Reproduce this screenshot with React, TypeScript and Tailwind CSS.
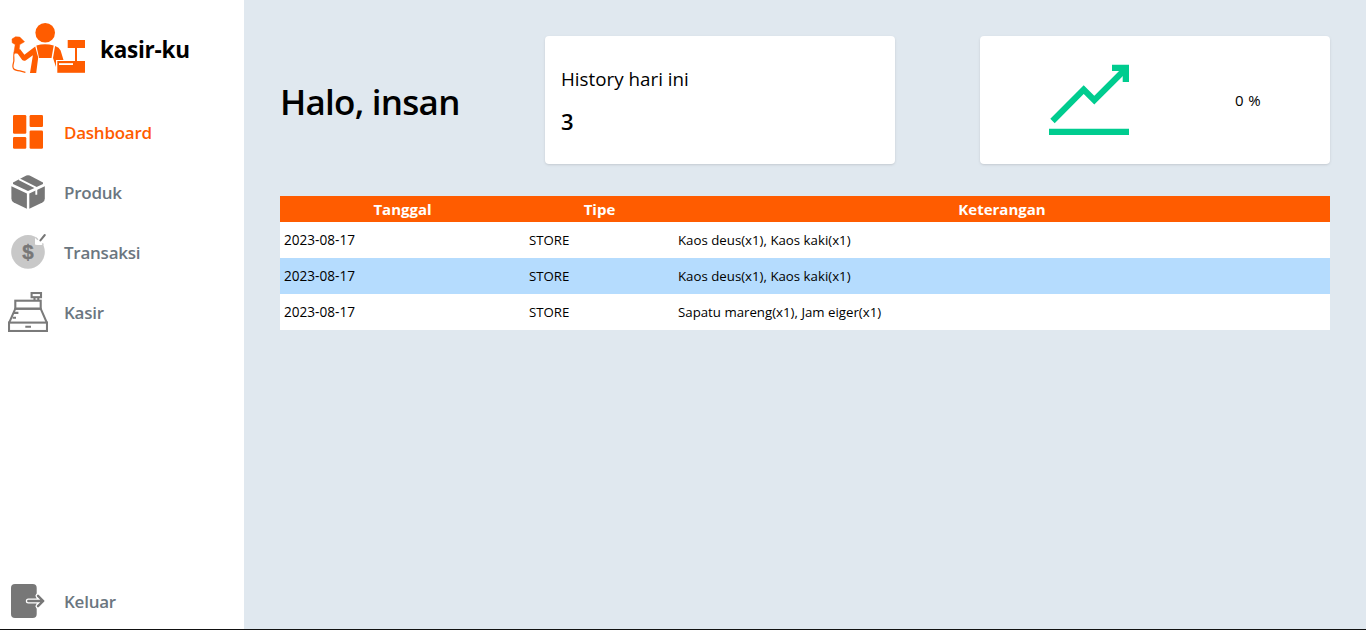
import React from "react";

function Logo() {
  return (
    <svg width="76" height="52" viewBox="0 0 76 52" fill="#ff5c00" className="shrink-0">
      <circle cx="35.2" cy="10.7" r="9.8" />
      <path d="M26.4 23.6Q35 21 43.7 23.6L41.5 36H29Z" />
      <path d="M25.2 24.4 14.4 32.8 9.8 26.8 7 30.7 12.2 38Q14 39.4 16 38.2L22.9 33.2 20 51H26.2L28.2 35.5Z" />
      <path d="M45.1 24Q49.2 25.3 50.6 28.6L53.5 38H46V45L43 36Z" />
      <path d="M2 17 5.5 14.8 9.8 15.1 14.5 19.8 9.8 22.6 8.6 31.2H3.8L5.2 22.6 2.2 20.8Z" stroke="#ff5c00" strokeWidth=".5" strokeLinejoin="round" />
      <path d="M4.6 30C2.4 34 5 37 3.4 41C1.8 47 4 48.4 10 48.8L15.4 50.4" fill="none" stroke="#ff5c00" strokeWidth="1.2" />
      <path d="M47.3 39H75V50.8H47.3Z" />
      <path d="M65 25H67V40H65Z" />
      <path d="M57.7 18H75V26H57.7Z" />
      <path d="M49 41.2H63V43H49Z" fill="#fff" />
    </svg>
  );
}

const svgProps = { width: 40, height: 40, viewBox: "0 0 40 40", className: "shrink-0" };

function DashboardIcon() {
  return (
    <svg {...svgProps} fill="#ff5c00">
      <rect x="5" y="3" width="13.3" height="18.7" rx="1.3" />
      <rect x="21.6" y="3" width="13.4" height="12" rx="1.3" />
      <rect x="5" y="25" width="13.3" height="11.7" rx="1.3" />
      <rect x="21.6" y="18.4" width="13.4" height="18.3" rx="1.3" />
    </svg>
  );
}

function BoxIcon() {
  return (
    <svg {...svgProps} fill="#777">
      <path d="M18.3 3.6Q20 2.8 21.7 3.6L35 10.6V12L20 19 5 12V10.6Z" />
      <path d="M3.4 14.3 18.9 21.6V36.8L5.8 30.6Q3.4 29.3 3.4 26.5Z" />
      <path d="M36.8 14.3 21.3 21.6V36.8L34.4 30.6Q36.8 29.3 36.8 26.5Z" />
      <path d="M11 7.2 28.3 15.9V22.8" fill="none" stroke="#fff" strokeWidth="1.9" />
    </svg>
  );
}

function MoneyIcon() {
  return (
    <svg {...svgProps}>
      <circle cx="20" cy="19.9" r="16.8" fill="#c8c8c8" />
      <path d="M27 2H38V13H30L27 12Z" fill="#fff" />
      <path d="M27.2 4.6 31 8.5V12.8H27.2Z" fill="#fff" />
      <path d="M27.3 5.2 30 7.8M34.2 11.7 35.5 12.6" stroke="#c8c8c8" strokeWidth="1.5" />
      <path d="M32.4 8.4 36.8 3" stroke="#777" strokeWidth="2" strokeLinecap="round" />
      <text x="20" y="27" textAnchor="middle" fontSize="20.5" fontWeight="700" fill="#777" stroke="#777" strokeWidth=".4" fontFamily="Liberation Sans">$</text>
    </svg>
  );
}

function RegisterIcon() {
  return (
    <svg {...svgProps} fill="none" stroke="#7a7a7a" strokeWidth="2.1">
      <rect x="1" y="30.6" width="38" height="8.4" />
      <path d="M1.2 30.6 7.3 16.7H32.7L38.8 30.6" />
      <rect x="7.3" y="8.7" width="25.4" height="8" />
      <rect x="23.6" y="1" width="9.4" height="4.2" />
      <path d="M26.5 5.2V8.7M30.3 5.2V8.7M17.3 34.8H23M6 20.9H10.4M4.6 25.7H8" />
    </svg>
  );
}

function ExitIcon() {
  return (
    <svg {...svgProps} fill="none" strokeLinecap="round" strokeLinejoin="round">
      <rect x="3" y="3" width="25.7" height="34" rx="4" fill="#777" />
      <path d="M20.3 20H35M30 14.8 35 20 30 25.2" stroke="#fff" strokeWidth="5" />
      <path d="M20.3 20H35.2M30 14.8 35.2 20 30 25.2" stroke="#777" strokeWidth="2.4" />
    </svg>
  );
}

function TrendIcon() {
  return (
    <svg width="80" height="72" viewBox="0 0 80 72" className="shrink-0">
      <path d="M3.5 57 34.7 25.6 45.3 36.2 76 5.5" fill="none" stroke="#00cc8f" strokeWidth="6.2" />
      <path d="M63 .8H80V18H73.7V7H63ZM0 64.7H80V71H0Z" fill="#00cc8f" />
    </svg>
  );
}

function NavItem({ icon, label, active }: { icon: React.ReactNode; label: string; active?: boolean }) {
  return (
    <a className="flex h-10 items-center gap-4">
      {icon}
      <span className={`pt-px text-[17px] font-semibold leading-7 tracking-[-0.25px] ${active ? "text-[#ff5c00]" : "text-[#6b7680]"}`}>{label}</span>
    </a>
  );
}

const rows = [
  ["2023-08-17", "STORE", "Kaos deus(x1), Kaos kaki(x1)"],
  ["2023-08-17", "STORE", "Kaos deus(x1), Kaos kaki(x1)"],
  ["2023-08-17", "STORE", "Sapatu mareng(x1), Jam eiger(x1)"],
];

export default function App() {
  return (
    <div className="flex h-[630px] w-full overflow-hidden border-b border-[#111] bg-[#e0e8ef] font-['Open_Sans','Noto_Sans',sans-serif] text-black">
      <aside className="flex w-[244px] shrink-0 flex-col bg-white">
        <div className="flex items-center gap-3.5 pl-2.5 pt-[22px]">
          <Logo />
          <h1 className="pt-[3px] text-[22.5px] font-bold leading-8 tracking-[-0.25px]">kasir-ku</h1>
        </div>
        <nav className="mt-[38px] flex flex-1 flex-col gap-5 pl-2">
          <NavItem icon={<DashboardIcon />} label="Dashboard" active />
          <NavItem icon={<BoxIcon />} label="Produk" />
          <NavItem icon={<MoneyIcon />} label="Transaksi" />
          <NavItem icon={<RegisterIcon />} label="Kasir" />
        </nav>
        <div className="pb-2 pl-2">
          <NavItem icon={<ExitIcon />} label="Keluar" />
        </div>
      </aside>
      <main className="flex-1 p-9">
        <section className="flex h-32 items-center">
          <h2 className="w-[265px] whitespace-nowrap pt-1 text-[35px] font-semibold leading-10 tracking-[-0.75px]">Halo, insan</h2>
          <div className="flex h-32 w-[350px] flex-col justify-center gap-3 rounded bg-white px-4 pt-0.5 shadow-sm">
            <p className="text-[18.8px] leading-7">History hari ini</p>
            <p className="text-[22px] font-semibold leading-8">3</p>
          </div>
          <div className="ml-[85px] flex h-32 w-[350px] items-center gap-[106px] rounded bg-white pl-[69px] shadow-sm">
            <TrendIcon />
            <p className="pb-px text-[15px] leading-6 tracking-[0.4px]">0 %</p>
          </div>
        </section>
        <table className="mt-8 w-[1050px] table-fixed border-collapse">
          <colgroup>
            <col className="w-[245px]" />
            <col className="w-[149px]" />
            <col />
          </colgroup>
          <thead>
            <tr className="h-[26px] bg-[#ff5c00] text-[15px] leading-[26px] text-white">
              <th className="p-0">Tanggal</th>
              <th className="p-0">Tipe</th>
              <th className="p-0">Keterangan</th>
            </tr>
          </thead>
          <tbody>
            {rows.map((row, i) => (
              <tr key={i} className="h-9 bg-white even:bg-[#b5dcfe]">
                {row.map((cell, j) => (
                  <td key={j} className={`px-1 py-0 leading-5 ${j === 0 ? "text-[13.6px]" : "text-[13.25px]"}`}>{cell}</td>
                ))}
              </tr>
            ))}
          </tbody>
        </table>
      </main>
    </div>
  );
}
